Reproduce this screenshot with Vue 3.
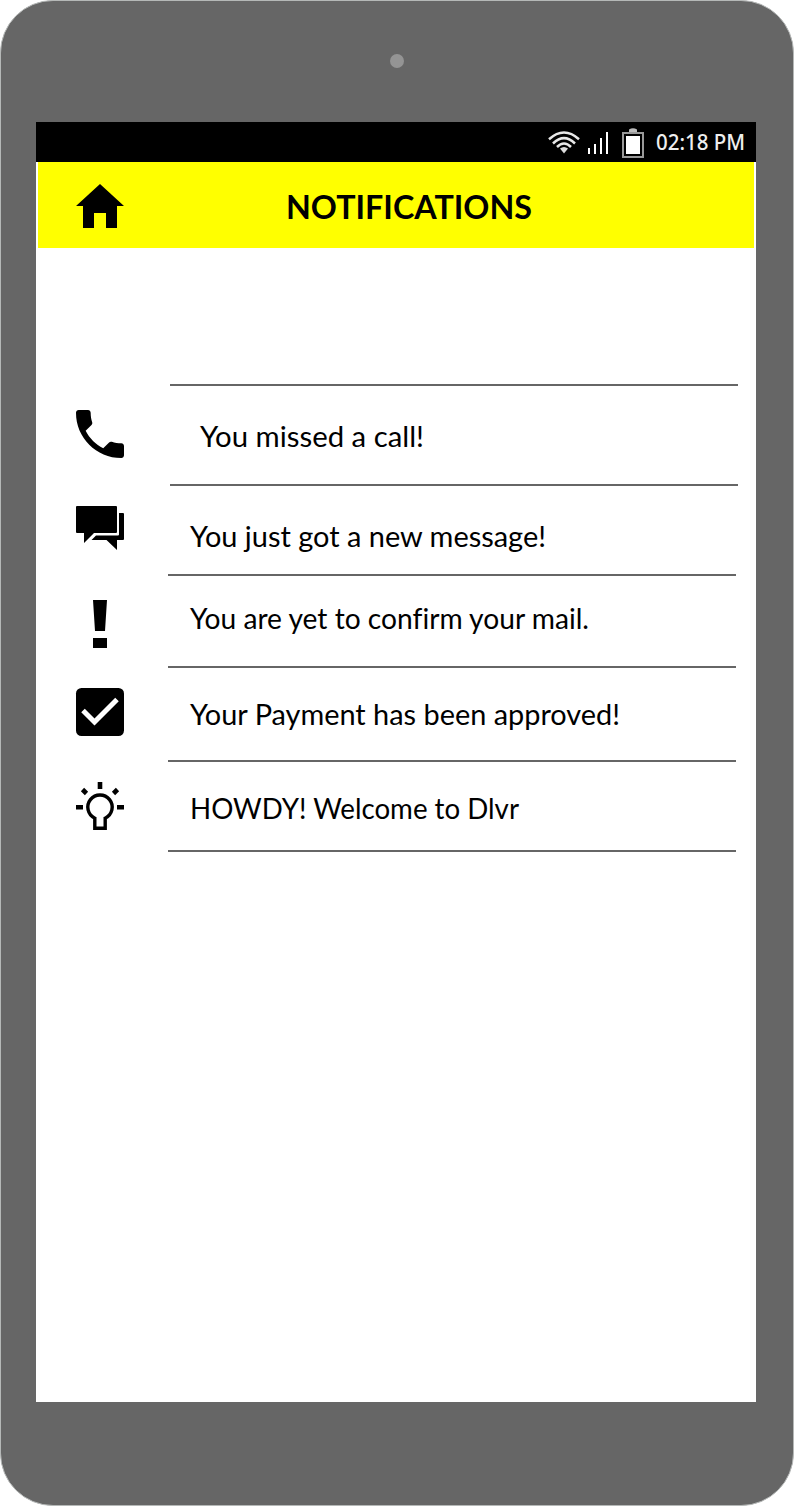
<script setup>
const rows = [
  { icon: 'phone', text: 'You missed a call!', width: 224 },
  { icon: 'message', text: 'You just got a new message!', width: 356 },
  { icon: 'alert', text: 'You are yet to confirm your mail.', width: 399 },
  { icon: 'check', text: 'Your Payment has been approved!', width: 430 },
  { icon: 'bulb', text: 'HOWDY! Welcome to Dlvr', width: 329 },
]
</script>

<template>
  <div class="device">
    <div class="camera"></div>
    <main class="screen">
      <div class="status">
        <svg class="wifi" width="32" height="24" viewBox="0 0 32 24" fill="none" stroke="#e8e8e8">
          <path d="M1 8.300Q16-5.300 31 8.300" stroke-width="2.500" />
          <path d="M5 12.500Q16 1.800 27 12.500" stroke-width="2.500" />
          <path d="M9 16Q16 9 23 16" stroke-width="2.500" />
          <path d="M12 17.500Q16 14.500 20 17.500L16 22.500Z" fill="#ddd" stroke="none" />
        </svg>
        <svg class="signal" width="21" height="22" viewBox="0 0 21 22" fill="#fff">
          <path d="M0 16h2v6H0zM6 12h2v10H6zM12 6h2v16h-2zM18 0h2v22h-2z" />
        </svg>
        <svg class="battery" width="22" height="30" viewBox="0 0 22 30">
          <path d="M7 1.500Q11-1 15 1.500V4H7z" fill="#bbb" />
          <rect x="1" y="5" width="20" height="24" fill="none" stroke="#999" stroke-width="2" />
          <rect x="4" y="8" width="14" height="18" fill="#fff" />
        </svg>
        <svg class="clock" width="90" height="40"><text x="0" y="28" textLength="89" lengthAdjust="spacingAndGlyphs">02:18 PM</text></svg>
      </div>
      <header>
        <svg class="home" width="48" height="44" viewBox="0 0 48 44">
          <path d="M24 0 48 22h-7v22H30V29H18v15H7V22H0Z" />
        </svg>
        <svg class="title" width="248" height="86"><text x="0" y="57" textLength="246" lengthAdjust="spacingAndGlyphs">NOTIFICATIONS</text></svg>
      </header>
      <section class="list">
        <div v-for="row in rows" :key="row.icon" class="row" :class="row.icon">
          <svg v-if="row.icon === 'phone'" class="icon" viewBox="3 3 18 18">
            <path d="M6.62 10.79c1.44 2.83 3.76 5.14 6.59 6.59l2.2-2.2c.27-.27.67-.36 1.02-.24 1.12.37 2.33.57 3.57.57.55 0 1 .45 1 1V20c0 .55-.45 1-1 1-9.39 0-17-7.61-17-17 0-.55.45-1 1-1h3.5c.55 0 1 .45 1 1 0 1.25.2 2.45.57 3.57.11.35.03.74-.25 1.02z" />
          </svg>
          <svg v-else-if="row.icon === 'message'" class="icon" viewBox="0 0 48 48">
            <path d="M1 0H40Q41 0 41 1V26Q41 27 40 27H18L8 37V27H1Q0 27 0 26V1Q0 0 1 0Z" />
            <path d="M43 7H47Q48 7 48 8V33Q48 34 47 34H41V44L30.500 34H15.500L20 29.500H42Q43 29.500 43 28.500Z" />
          </svg>
          <svg v-else-if="row.icon === 'alert'" class="icon" viewBox="0 0 48 48">
            <path d="M17 0h14l-2 31H19zM17 38h14v10H17z" />
          </svg>
          <svg v-else-if="row.icon === 'check'" class="icon" viewBox="0 0 48 48">
            <rect width="48" height="48" rx="5.500" />
            <path d="M7 22.500 18.500 34 41 11.500" fill="none" stroke="#fff" stroke-width="5" />
          </svg>
          <svg v-else class="icon" viewBox="0 0 48 48">
            <path d="M21.700 0h4.600v7h-4.600zM0 23h7v4.500H0zM41 23h7v4.500h-7z" />
            <path d="m6.500 7.500 4 4M41.500 7.500l-4 4" stroke="#000" stroke-width="4.600" />
            <path d="M18.800 46.300V36.200A12.200 12.200 0 1 1 29.200 36.200V46.300Z" fill="none" stroke="#000" stroke-width="3.400" />
          </svg>
          <div class="message-cell">
            <svg class="copy" :width="row.width + 4" height="72"><text x="-1" y="60.500" :textLength="row.width" lengthAdjust="spacingAndGlyphs">{{ row.text }}</text></svg>
          </div>
        </div>
      </section>
    </main>
  </div>
</template>

<style>
body { background: #fff; }
</style>

<style scoped>
.device {
  box-sizing: border-box;
  width: 794px;
  height: 1506px;
  padding: 53px 0 0 35px;
  border: 1px solid #b5b8b7;
  border-radius: 53px;
  background: #666;
}
.camera {
  width: 14px;
  height: 14px;
  margin: 0 0 54px 354px;
  border-radius: 50%;
  background: #949494;
}
.screen {
  width: 720px;
  height: 1280px;
  background: #fff;
}
svg { display: block; flex: none; overflow: visible; }
.status {
  display: flex;
  align-items: flex-start;
  height: 40px;
  padding-left: 512px;
  background: #000;
}
.wifi { margin-top: 9px; }
.signal { margin: 10px 0 0 8px; }
.battery { margin: 6px 0 0 13px; }
.clock { margin-left: 12px; }
.clock text { font: 500 22px "Noto Sans", "Open Sans", sans-serif; fill: #eee; }
header {
  display: flex;
  align-items: flex-start;
  height: 86px;
  margin: 0 2px;
  padding-left: 38px;
  background: #ff0;
}
.home { margin-top: 22px; }
.title { margin-left: 162px; }
.title text { font: 700 32px Lato, sans-serif; }
.list { padding-top: 138px; }
.row {
  display: flex;
  box-sizing: border-box;
  height: 100px;
  padding-left: 40px;
}
.icon { width: 48px; height: 48px; margin-top: 20px; }
.message-cell {
  box-sizing: border-box;
  width: 568px;
  height: 100%;
  margin-left: 44px;
  padding-left: 23px;
  border-bottom: 2px solid #666;
}
.copy text {
  font: 29px Lato, sans-serif;
  font-variant-ligatures: none;
  fill: #000;
}
.phone .message-cell {
  height: 102px;
  margin: -2px 0 0 46px;
  padding-left: 31px;
  border-top: 2px solid #666;
}
.phone .icon, .alert .icon { margin-top: 24px; }
.message { height: 90px; }
.alert { height: 92px; }
.check { height: 94px; }
.bulb { height: 90px; }
.alert .copy { margin-top: -8px; }
.check .copy, .bulb .copy { margin-top: -4px; }
</style>
